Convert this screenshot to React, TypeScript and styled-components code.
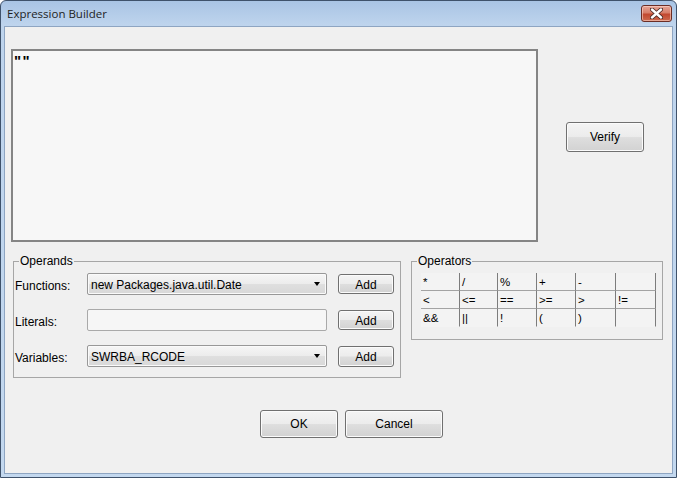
import React from "react";
import styled, { createGlobalStyle } from "styled-components";

const Global = createGlobalStyle`
  html, body { margin: 0; padding: 0; background: #ffffff; }
  * { box-sizing: border-box; }
`;

const Window = styled.div`
  width: 677px;
  height: 478px;
  display: flex;
  flex-direction: column;
  border: 1px solid #3f526b;
  border-radius: 6px 6px 0 0;
  background: linear-gradient(to bottom, #a9c4e4 0px, #bed4ed 24px, #c3d8ef 100%);
  padding: 0 3px 3px;
  font-family: "Liberation Sans", Arial, sans-serif;
  color: #000;
`;

const TitleBar = styled.div`
  height: 25px;
  flex: none;
  display: flex;
  align-items: flex-start;
  justify-content: space-between;
  padding: 0 1px 0 3px;
`;

const Title = styled.span`
  font-family: "Open Sans", "Noto Sans", sans-serif;
  font-size: 11.5px;
  line-height: 26px;
  color: #1e1e1e;
`;

const CloseButton = styled.div`
  margin-top: 4px;
  width: 31px;
  height: 17px;
  border: 1px solid #6b2d25;
  border-radius: 3px;
  background: linear-gradient(to bottom, #e6a596 0%, #d77e69 45%, #c2482f 55%, #cd6a4f 100%);
  box-shadow: inset 0 0 0 1px rgba(255, 220, 210, 0.55);
  display: flex;
  align-items: center;
  justify-content: center;
`;

const Panel = styled.div`
  flex: 1;
  display: flex;
  flex-direction: column;
  border: 1px solid #8ea5c2;
  background: #f0f0f0;
  padding: 22px 0 0 6px;
`;

const TopRow = styled.div`
  display: flex;
`;

const ExprBox = styled.div`
  width: 527px;
  height: 193px;
  border: 2px solid #858585;
  background: #f7f7f7;
  padding: 3px 1px;
  font-family: "Liberation Sans", Arial, sans-serif;
  font-weight: bold;
  font-size: 15px;
  line-height: 14px;
  letter-spacing: 1.5px;
`;

const VerifyCell = styled.div`
  flex: 1;
  display: flex;
  justify-content: center;
  align-items: flex-start;
  padding-top: 73px;
`;

const Button = styled.button<{ $w: number; $h: number; $pt?: number }>`
  width: ${(p) => p.$w}px;
  height: ${(p) => p.$h}px;
  padding: ${(p) => p.$pt ?? 0}px 0 0;
  margin: 0;
  border: 1px solid #707070;
  border-radius: 3px;
  background: linear-gradient(to bottom, #f4f4f4 0%, #ececec 48%, #dedede 52%, #d2d2d2 100%);
  box-shadow: inset 0 0 0 1px #fbfbfb;
  font-family: "Liberation Sans", Arial, sans-serif;
  font-size: 12px;
  color: #000;
  display: flex;
  align-items: center;
  justify-content: center;
`;

const MiddleRow = styled.div`
  display: flex;
  align-items: flex-start;
  gap: 10px;
  margin: 12px 0 0 2px;
`;

const Group = styled.fieldset<{ $w: number }>`
  width: ${(p) => p.$w}px;
  margin: 0;
  padding: 0;
  min-width: 0;
  border: 1px solid #a6a6a6;
`;

const Legend = styled.legend`
  margin-left: 5px;
  padding: 0 1px;
  font-size: 12px;
  line-height: 14px;
  color: #000;
`;

const OperandsBody = styled.div`
  display: flex;
  flex-direction: column;
  gap: 14px;
  padding: 5px 6px 10px 1px;
`;

const FieldRow = styled.div`
  height: 22px;
  display: flex;
  align-items: center;
`;

const Label = styled.span`
  width: 72px;
  font-size: 12px;
  padding-top: 3px;
`;

const Select = styled.div`
  width: 240px;
  height: 22px;
  margin-right: 11px;
  border: 1px solid #989898;
  border-radius: 2px;
  background: linear-gradient(to bottom, #f6f6f6 0%, #ececec 50%, #dfdfdf 52%, #d8d8d8 100%);
  box-shadow: inset 0 0 0 1px #fafafa;
  display: flex;
  align-items: center;
  justify-content: space-between;
  padding: 0 6px 0 3px;
  font-size: 12px;
`;

const SelectText = styled.span`
  padding-top: 2px;
`;

const Arrow = styled.span`
  width: 0;
  height: 0;
  border-left: 3.5px solid transparent;
  border-right: 3.5px solid transparent;
  border-top: 4px solid #000;
`;

const TextInput = styled.div`
  width: 240px;
  height: 22px;
  margin-right: 11px;
  border: 1px solid #a9a9a9;
  border-radius: 2px;
  background: #f6f6f6;
`;

const OperatorsBody = styled.div`
  padding: 5px 6px 12px 9px;
`;

const OpTable = styled.div`
  width: 235px;
  display: grid;
  grid-template-columns: 39px 38px 39px 39px 40px 40px;
  background: #f3f3f3;
`;

const Cell = styled.div<{ $last: boolean }>`
  height: 18px;
  border-right: 1px solid #7c7c7c;
  border-bottom: 1px solid ${(p) => (p.$last ? "transparent" : "#a3a3a3")};
  padding: 1px 0 0 2px;
  font-family: "Liberation Sans", Arial, sans-serif;
  font-size: 11.5px;
  line-height: 16px;
  white-space: pre;
`;

const BottomRow = styled.div`
  display: flex;
  justify-content: center;
  gap: 7px;
  margin-top: 32px;
  padding-left: 20px;
`;

const operators = [
  ["*", "/", "%", "+", "-", ""],
  ["<", "<=", "==", ">=", ">", "!="],
  ["&&", "||", "!", "(", ")", ""],
];

export default function App() {
  return (
    <>
      <Global />
      <Window>
        <TitleBar>
          <Title>Expression Builder</Title>
          <CloseButton>
            <svg width="13" height="11" viewBox="0 0 13 11">
              <path d="M2 1.5 L11 9.5 M11 1.5 L2 9.5" stroke="#4a2a26" strokeWidth="4.2" strokeLinecap="round" />
              <path d="M2 1.5 L11 9.5 M11 1.5 L2 9.5" stroke="#ffffff" strokeWidth="2.4" strokeLinecap="round" />
            </svg>
          </CloseButton>
        </TitleBar>
        <Panel>
          <TopRow>
            <ExprBox>""</ExprBox>
            <VerifyCell>
              <Button $w={78} $h={30}>Verify</Button>
            </VerifyCell>
          </TopRow>
          <MiddleRow>
            <Group $w={388}>
              <Legend>Operands</Legend>
              <OperandsBody>
                <FieldRow>
                  <Label>Functions:</Label>
                  <Select>
                    <SelectText>new Packages.java.util.Date</SelectText>
                    <Arrow />
                  </Select>
                  <Button $w={56} $h={20} $pt={2}>Add</Button>
                </FieldRow>
                <FieldRow>
                  <Label>Literals:</Label>
                  <TextInput />
                  <Button $w={56} $h={20} $pt={2}>Add</Button>
                </FieldRow>
                <FieldRow>
                  <Label>Variables:</Label>
                  <Select>
                    <SelectText>SWRBA_RCODE</SelectText>
                    <Arrow />
                  </Select>
                  <Button $w={56} $h={21} $pt={2}>Add</Button>
                </FieldRow>
              </OperandsBody>
            </Group>
            <Group $w={252}>
              <Legend>Operators</Legend>
              <OperatorsBody>
                <OpTable>
                  {operators.map((row, r) =>
                    row.map((op, c) => (
                      <Cell key={`${r}-${c}`} $last={r === operators.length - 1}>
                        {op}
                      </Cell>
                    ))
                  )}
                </OpTable>
              </OperatorsBody>
            </Group>
          </MiddleRow>
          <BottomRow>
            <Button $w={78} $h={28}>OK</Button>
            <Button $w={98} $h={28}>Cancel</Button>
          </BottomRow>
        </Panel>
      </Window>
    </>
  );
}
